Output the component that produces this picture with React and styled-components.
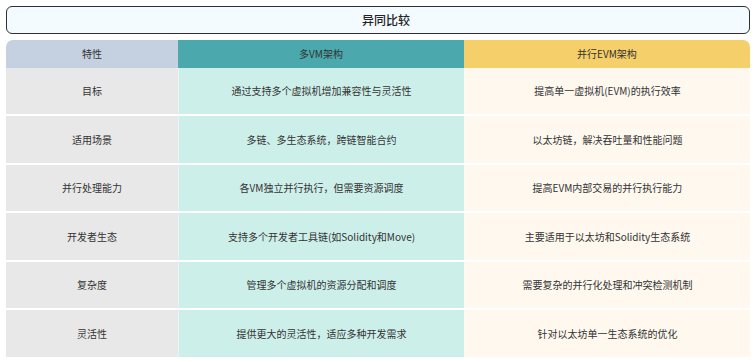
import React from "react";
import styled, { createGlobalStyle } from "styled-components";

const Global = createGlobalStyle`
  html, body { margin: 0; padding: 0; background: #ffffff; }
  body { font-family: "Noto Sans CJK SC", "Noto Sans", sans-serif; color: #333; }
  * { box-sizing: border-box; }
`;

const Page = styled.div`
  padding: 5.5px 5px 0 6px;
  display: flex;
  flex-direction: column;
  gap: 6px;
  width: 755px;
`;

const Title = styled.div`
  height: 28px;
  border: 1.5px solid #2f2f38;
  border-radius: 6px;
  background: #f3fbfe;
  display: flex;
  align-items: center;
  justify-content: center;
  padding-left: 16px;
  font-size: 12px;
  font-weight: 500;
  color: #222;
`;

const Table = styled.div`
  display: grid;
  grid-template-columns: 172px 286px 286px;
  border-radius: 7px 7px 0 0;
  overflow: hidden;
`;

const headBg = ["#c5d0e0", "#4ba9ad", "#f5cf6a"];
const bodyBg = ["#e8e8e8", "#cdefea", "#fef8ef"];

const HeadCell = styled.div`
  height: 28px;
  display: flex;
  align-items: center;
  justify-content: center;
  background: ${(p) => headBg[p.$col]};
  font-size: 10px;
  color: #333;
`;

const Cell = styled.div`
  height: 48.5px;
  padding-bottom: 0.5px;
  display: flex;
  align-items: center;
  justify-content: center;
  background: ${(p) => bodyBg[p.$col]};
  border-bottom: 2px solid #ffffff;
  border-left: ${(p) => (p.$col === 0 ? "none" : "1px solid rgba(255,255,255,0.45)")};
  font-size: 10px;
  color: #333;
  text-align: center;
`;

const headers = ["特性", "多VM架构", "并行EVM架构"];
const rows = [
  ["目标", "通过支持多个虚拟机增加兼容性与灵活性", "提高单一虚拟机(EVM)的执行效率"],
  ["适用场景", "多链、多生态系统，跨链智能合约", "以太坊链，解决吞吐量和性能问题"],
  ["并行处理能力", "各VM独立并行执行，但需要资源调度", "提高EVM内部交易的并行执行能力"],
  ["开发者生态", "支持多个开发者工具链(如Solidity和Move)", "主要适用于以太坊和Solidity生态系统"],
  ["复杂度", "管理多个虚拟机的资源分配和调度", "需要复杂的并行化处理和冲突检测机制"],
  ["灵活性", "提供更大的灵活性，适应多种开发需求", "针对以太坊单一生态系统的优化"],
];

export default function App() {
  return (
    <>
      <Global />
      <Page>
        <Title>异同比较</Title>
        <Table>
          {headers.map((h, i) => (
            <HeadCell key={h} $col={i}>{h}</HeadCell>
          ))}
          {rows.map((r, ri) =>
            r.map((c, ci) => (
              <Cell key={ri + "-" + ci} $col={ci}>{c}</Cell>
            ))
          )}
        </Table>
      </Page>
    </>
  );
}
